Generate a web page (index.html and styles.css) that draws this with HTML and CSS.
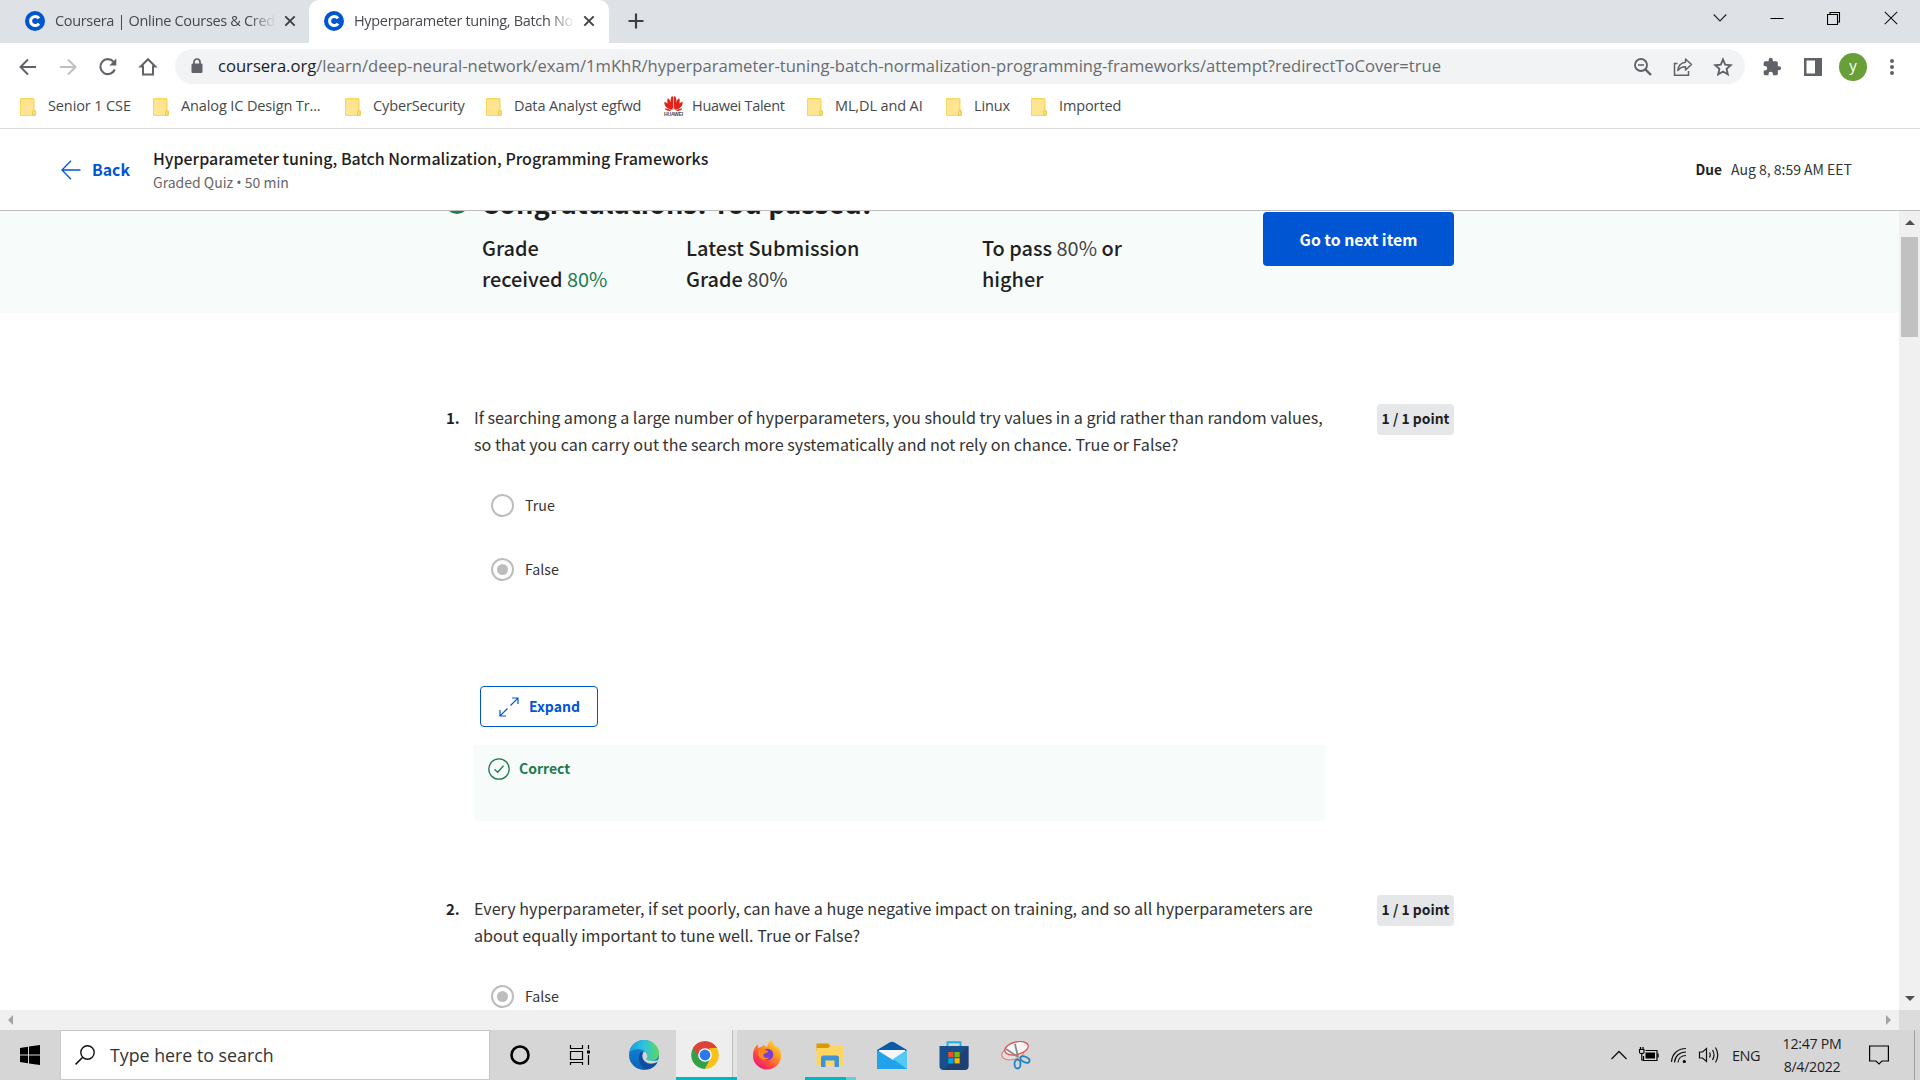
FILE: index.html
```
<!DOCTYPE html>
<html lang="en">
<head>
<meta charset="utf-8">
<title>Hyperparameter tuning, Batch Normalization, Programming Frameworks | Coursera</title>
<link rel="stylesheet" href="styles.css">
</head>
<body>
<svg class="defs" width="0" height="0">
  <symbol id="coursera" viewBox="0 0 20 20"><circle cx="10" cy="10" r="10" fill="#0056d2"/><path d="M14 7.400A4.600 4.600 0 1 0 14 12.600" fill="none" stroke="#fff" stroke-width="3"/></symbol>
  <symbol id="folder" viewBox="0 0 16 18"><path d="M1 0H13Q14.5 0 14.5 1.500V12L16 13V17L15 18H1Q0 18 0 17V1Q0 0 1 0Z" fill="#fbd75b"/><path d="M1 1.500H13V17H1Z" fill="#ffe592"/><path d="M12.500 17V14Q12.500 12.500 14 12.500H15V17Z" fill="#ffe592" stroke="#edc241" stroke-width=".8"/></symbol>
  <symbol id="close" viewBox="0 0 12 12"><path d="M1.300 1.300L10.700 10.700M10.700 1.300L1.300 10.700" stroke="#3c4043" stroke-width="1.900"/></symbol>
</svg>

<header class="tabstrip">
  <div class="tab tab-idle"><svg class="favicon"><use href="#coursera"/></svg><span class="tab-title">Coursera | Online Courses &amp; Cred</span><svg class="tab-close"><use href="#close"/></svg></div>
  <div class="tab tab-active"><svg class="favicon"><use href="#coursera"/></svg><span class="tab-title">Hyperparameter tuning, Batch No</span><svg class="tab-close"><use href="#close"/></svg></div>
  <svg class="newtab" viewBox="0 0 16 16"><path d="M8 .5V15.500M.5 8H15.500" stroke="#3c4043" stroke-width="2.200"/></svg>
  <div class="window-controls">
    <svg viewBox="0 0 14 14"><path d="M.7 3.500L7 10L13.300 3.500" fill="none" stroke="#222" stroke-width="1.100"/></svg>
    <svg viewBox="0 0 14 14"><path d="M.5 7.500H13.500" stroke="#000"/></svg>
    <svg viewBox="0 0 14 14"><path d="M.5 3.500H10.500V13.500H.5ZM3 3V1.500H12.500V11H11" fill="none" stroke="#000" stroke-width="1.100"/></svg>
    <svg viewBox="0 0 14 14"><path d="M.8 .8L13.200 13.200M13.200 .8L.8 13.200" stroke="#111" stroke-width="1.100"/></svg>
  </div>
</header>

<nav class="toolbar">
  <div class="nav-buttons">
    <svg viewBox="0 0 20 20"><path d="M18 10H3M10 2.500L2.500 10L10 17.500" fill="none" stroke="#5f6368" stroke-width="2"/></svg>
    <svg viewBox="0 0 20 20"><path d="M2 10H17M10 2.500L17.500 10L10 17.500" fill="none" stroke="#bfc1c3" stroke-width="2"/></svg>
    <svg viewBox="0 0 20 20"><path d="M16.800 12.500A7.500 7.500 0 1 1 15.500 4.700" fill="none" stroke="#5f6368" stroke-width="2.100"/><path d="M18.300 1.500V8.500H11.300Z" fill="#5f6368"/></svg>
    <svg viewBox="0 0 20 20"><path d="M5 17.500V9.500H2.700L10 2.200L17.300 9.500H15V17.500Z" fill="none" stroke="#5f6368" stroke-width="2"/></svg>
  </div>
  <div class="omnibox">
    <svg class="lock" viewBox="0 0 12 16"><path d="M3 6V4A3 3 0 0 1 9 4V6" fill="none" stroke="#5f6368" stroke-width="1.700"/><rect x=".5" y="5.500" width="11" height="9.500" rx="1.300" fill="#5f6368"/></svg>
    <span class="url"><b>coursera.org</b>/learn/deep-neural-network/exam/1mKhR/hyperparameter-tuning-batch-normalization-programming-frameworks/attempt?redirectToCover=true</span>
    <div class="omni-actions">
      <svg viewBox="0 0 20 20"><circle cx="8" cy="8" r="6" fill="none" stroke="#5f6368" stroke-width="1.900"/><path d="M5 8H11" stroke="#5f6368" stroke-width="1.600"/><path d="M12.300 12.300L18 18" stroke="#5f6368" stroke-width="2.400"/></svg>
      <svg viewBox="0 0 20 20"><path d="M4.500 6.500H1.500V18.200H15.500V14" fill="none" stroke="#5f6368" stroke-width="1.500"/><path d="M12.500 2L18.500 7.500L12.500 13V9.800C9 9.800 6.700 11 4.800 13.500C5.200 9 8 5.800 12.500 5.200Z" fill="none" stroke="#5f6368" stroke-width="1.500" stroke-linejoin="round"/></svg>
      <svg viewBox="0 0 20 20"><path d="M10 2.500L12.200 7.700L17.800 8.200L13.600 11.900L14.800 17.400L10 14.500L5.200 17.400L6.400 11.900L2.200 8.200L7.800 7.700Z" fill="none" stroke="#5f6368" stroke-width="1.900"/></svg>
    </div>
  </div>
  <div class="browser-actions">
    <svg viewBox="0 0 24 24"><path d="M20.500 11H19V7a2 2 0 0 0-2-2h-4V3.500a2.500 2.500 0 0 0-5 0V5H4a2 2 0 0 0-2 2v3.800h1.500a2.700 2.700 0 0 1 0 5.400H2V20a2 2 0 0 0 2 2h3.800v-1.500a2.700 2.700 0 0 1 5.400 0V22H17a2 2 0 0 0 2-2v-4h1.500a2.500 2.500 0 0 0 0-5z" fill="#5f6368"/></svg>
    <svg viewBox="0 0 20 20"><path fill-rule="evenodd" d="M1 1H19V19H1ZM3.500 3.500V16.500H12V3.500Z" fill="#5f6368"/></svg>
    <span class="avatar">y</span>
    <svg viewBox="0 0 20 20"><g fill="#5f6368"><circle cx="10" cy="4" r="2"/><circle cx="10" cy="10" r="2"/><circle cx="10" cy="16" r="2"/></g></svg>
  </div>
</nav>

<nav class="bookmarks">
  <span class="bookmark"><svg><use href="#folder"/></svg><span>Senior 1 CSE</span></span>
  <span class="bookmark"><svg><use href="#folder"/></svg><span>Analog IC Design Tr...</span></span>
  <span class="bookmark"><svg><use href="#folder"/></svg><span>CyberSecurity</span></span>
  <span class="bookmark"><svg><use href="#folder"/></svg><span>Data Analyst egfwd</span></span>
  <span class="bookmark huawei"><span class="huawei-logo"><svg viewBox="0 0 20 15"><g fill="#e2231a"><path d="M9.700 14C6.800 9 6.300 4 8.200.3Q9.600.2 9.700 1Z"/><path d="M10.300 14C13.200 9 13.700 4 11.800.3Q10.400.2 10.300 1Z"/><path d="M9 14C4.500 10.500 2.800 6.500 4.300 2.200C6.500 3 8.500 8 9 14Z"/><path d="M11 14C15.500 10.500 17.200 6.500 15.700 2.200C13.500 3 11.500 8 11 14Z"/><path d="M8.300 14C3.500 13 .4 10 .9 5.800C4 6.500 7 10 8.300 14Z"/><path d="M11.700 14C16.500 13 19.600 10 19.100 5.800C16 6.500 13 10 11.700 14Z"/><path d="M7.800 14.800C4.500 15.300 2 14.200 1.100 12.200Q5 12.200 7.800 14.800Z"/><path d="M12.200 14.800C15.500 15.300 18 14.200 18.900 12.200Q15 12.200 12.200 14.800Z"/></g></svg><i>HUAWEI</i></span><span>Huawei Talent</span></span>
  <span class="bookmark"><svg><use href="#folder"/></svg><span>ML,DL and AI</span></span>
  <span class="bookmark"><svg><use href="#folder"/></svg><span>Linux</span></span>
  <span class="bookmark"><svg><use href="#folder"/></svg><span>Imported</span></span>
</nav>

<header class="quiz-header">
  <a class="back"><svg viewBox="0 0 20 20"><path d="M19.500 10H1.500M10 .8L1 10L10 19.200" fill="none" stroke="#0056d2" stroke-width="1.300"/></svg>Back</a>
  <div class="quiz-name"><h1>Hyperparameter tuning, Batch Normalization, Programming Frameworks</h1><p>Graded Quiz <span class="dot">•</span> 50 min</p></div>
  <div class="due"><b>Due</b>Aug 8, 8:59 AM EET</div>
</header>

<div class="viewport">
  <main class="page">
    <section class="banner">
      <div class="congrats"><svg viewBox="0 0 24 24"><circle cx="12" cy="12" r="12" fill="#1d7c50"/><path d="M6.500 12.500L10.500 16.500L17.500 8.500" fill="none" stroke="#fff" stroke-width="2"/></svg><h2>Congratulations! You passed!</h2></div>
      <div class="scores">
        <p>Grade<br>received <span class="green">80%</span></p>
        <p>Latest Submission<br>Grade <span>80%</span></p>
        <p>To pass <span>80%</span> or<br>higher</p>
        <button class="next">Go to next item</button>
      </div>
    </section>

    <article class="question">
      <b class="number">1.</b>
      <div class="question-body">
        <p class="prompt">If searching among a large number of hyperparameters, you should try values in a grid rather than random values,<br>so that you can carry out the search more systematically and not rely on chance. True or False?</p>
        <div class="option"><span class="radio"></span><span class="answer">True</span></div>
        <div class="option"><span class="radio checked"></span><span class="answer">False</span></div>
        <button class="expand"><svg viewBox="0 0 20 20"><path d="M11.500 8.500L18.700 1.300M13 1H19V7M8.500 11.500L1.300 18.700M1 13V19H7" fill="none" stroke="#0056d2" stroke-width="1.200"/></svg><span>Expand</span></button>
        <div class="feedback"><svg viewBox="0 0 22 22"><circle cx="11" cy="11" r="10.200" fill="none" stroke="#1d7c50" stroke-width="1.300"/><path d="M6.500 11.200L9.700 14.300L15.500 7.800" fill="none" stroke="#1d7c50" stroke-width="1.300"/></svg>Correct</div>
      </div>
      <span class="points">1 / 1 point</span>
    </article>

    <article class="question">
      <b class="number">2.</b>
      <div class="question-body">
        <p class="prompt">Every hyperparameter, if set poorly, can have a huge negative impact on training, and so all hyperparameters are<br>about equally important to tune well. True or False?</p>
        <div class="option"><span class="radio checked"></span><span class="answer">False</span></div>
      </div>
      <span class="points">1 / 1 point</span>
    </article>
  </main>
  <div class="vscroll"><i class="up"></i><span class="thumb"></span><i class="down"></i></div>
</div>
<div class="hscroll"><i class="left"></i><i class="right"></i><span class="corner"></span></div>

<footer class="taskbar">
  <div class="start"><svg viewBox="0 0 20 20"><path d="M0 2.900L8 1.800V9.500H0ZM9 1.600L20 0V9.500H9ZM0 10.500H8V18.200L0 17.100ZM9 10.500H20V20L9 18.400Z"/></svg></div>
  <div class="search"><svg viewBox="0 0 20 20"><circle cx="12.500" cy="7.500" r="6.700" fill="none" stroke="#111" stroke-width="1.400"/><path d="M7.700 12.300L.6 19.400" stroke="#111" stroke-width="1.500"/></svg>Type here to search</div>
  <div class="apps">
    <div class="app"><svg viewBox="0 0 32 32"><circle cx="15" cy="16" r="8.500" fill="none" stroke="#000" stroke-width="2.600"/></svg></div>
    <div class="app"><svg viewBox="0 0 32 32"><path d="M4.500 6V9.500H16.500V6M4.500 12.500H16.500V20.500H4.500ZM4.500 26V23.500H16.500V26M22.500 6V10M22.500 16V26" fill="none" stroke="#000" stroke-width="1.200"/><rect x="21" y="11.500" width="3" height="3"/></svg></div>
    <div class="app"><svg viewBox="0 0 32 32"><defs><linearGradient id="ea" x1="0" x2="1"><stop offset="0" stop-color="#1a9fe0"/><stop offset=".5" stop-color="#2fc2df"/><stop offset="1" stop-color="#5fd95a"/></linearGradient><linearGradient id="eb" x2="0" y2="1"><stop stop-color="#1289d8"/><stop offset="1" stop-color="#0b63b8"/></linearGradient></defs><circle cx="16" cy="16" r="15" fill="url(#eb)"/><path d="M1.200 14C2 6 8.500 1 16 1C25 1 31 7.500 31 14.500C31 19 27.500 22 23 22C19.500 22 18 20.500 18.500 19.500C20 17.500 19.500 12 12.500 10.500C7 9.500 3 11 1.200 14Z" fill="url(#ea)"/><path d="M12.500 13.500C8.500 19 12 29.500 20 30.500C24 29.500 27.500 27 29.500 23.500C24 26.500 16 25 14.500 19.500C14 17 15 15.500 15.500 12.500Z" fill="#124c9c"/><path d="M15.800 12.500C12.500 17 15 23.500 22 24.500C25.500 25 28.500 23.500 30 22L32 24V20C29 22.500 20 22.500 18.500 20.500C18.300 19.500 20 18.500 19 15.500C18.300 13.500 17 12.500 15.800 12.500Z" fill="#d6d6d6"/></svg></div>
    <div class="app current"><svg viewBox="0 0 32 32"><path d="M16 16L4 9.100A13.900 13.900 0 0 1 28 9.100Z" fill="#ea4335"/><path d="M4 9.100A13.900 13.900 0 0 0 16 29.900L22 19.500L16 16Z" fill="#34a04c"/><path d="M28 9.100A13.900 13.900 0 0 1 16 29.900L22 18L20 9.100Z" fill="#fbc116"/><path d="M4 9.100A13.900 13.900 0 0 1 28 9.100H16L10 18Z" fill="#db4437"/><circle cx="16" cy="16" r="6.800" fill="#fff"/><circle cx="16" cy="16" r="5.400" fill="#2b79ec"/></svg></div>
    <div class="app"><svg viewBox="0 0 32 32"><defs><linearGradient id="fa" x1="1" y1="0" x2=".2" y2="1"><stop stop-color="#fff44f"/><stop offset=".4" stop-color="#ff9a1f"/><stop offset=".75" stop-color="#ff4045"/><stop offset="1" stop-color="#e31587"/></linearGradient></defs><path d="M20 1C23 4 23 6 25 8C26 8 26.500 7 26.500 6.500C29 9.500 30 13 30 17A14 13.500 0 0 1 2 17C2 12 3.500 9.500 5 7L6.500 5.500L7.500 9L11 7.500L13 6L15.500 8.500C17 6 17.500 3 20 1Z" fill="url(#fa)"/><circle cx="16.500" cy="15.500" r="5.800" fill="#7a3fd0"/><path d="M7.500 11C11 8.500 14 11 17 12C17 14 14 14 12.500 15.500C12 18 14 19.500 18 18.500C15 22.500 8 21 7.500 15Z" fill="#ff8b1c"/></svg></div>
    <div class="app explorer"><svg viewBox="0 0 32 32"><path d="M2.500 4.500H14.500L16 7V12H2.500Z" fill="#d99a00"/><path d="M2.500 9H14L16.500 7H29.500V26H2.500Z" fill="#ffd562"/><path d="M7 28V19Q7 16.500 9.500 16.500H22.500Q25 16.500 25 19V28H20.500V21.500H11.500V28Z" fill="#3c93d8"/></svg></div>
    <div class="app"><svg viewBox="0 0 32 32"><path d="M1 11L13.500 3.500Q16 2 18.500 3.500L31 11V18H1Z" fill="#0a5aa8"/><path d="M3 11H29V20L16 26L3 20Z" fill="#f5f5f5"/><path d="M1 11L17 21L31 11V30H1Z" fill="#22a2e8"/><path d="M31 11L17 20L31 30Z" fill="#54c8f5"/></svg></div>
    <div class="app"><svg viewBox="0 0 32 32"><path d="M9.500 8V3.200H22.500V8" fill="none" stroke="#1db0ec" stroke-width="1.900"/><path d="M1.500 7H30.500V27Q30.500 31 26.500 31H5.500Q1.500 31 1.500 27Z" fill="#18508c"/><path d="M30.500 7V27Q30.500 31 26.500 31H5.500Z" fill="#203965" opacity=".65"/><path d="M10.300 13H15.500V18.200H10.300Z" fill="#f25022"/><path d="M16.500 13H21.700V18.200H16.500Z" fill="#7fba00"/><path d="M10.300 19.200H15.500V24.400H10.300Z" fill="#00a4ef"/><path d="M16.500 19.200H21.700V24.400H16.500Z" fill="#ffb900"/></svg></div>
    <div class="app"><svg viewBox="0 0 32 32"><ellipse cx="13" cy="14" rx="11.500" ry="6.500" transform="rotate(-15 13 14)" fill="#e6dede" stroke="#e07b78" stroke-width="1"/><ellipse cx="16.500" cy="9.300" rx="12" ry="6.300" transform="rotate(-14 16.500 9.300)" fill="#f6f6f6" stroke="#e64b48" stroke-width="1.200"/><path d="M15 5L18 18M6 10L18 18" stroke="#888" stroke-width="1.700"/><ellipse cx="17.500" cy="25" rx="3" ry="4.500" fill="none" stroke="#1d84c4" stroke-width="1.800"/><ellipse cx="25" cy="20.500" rx="4.800" ry="2.700" transform="rotate(25 25 20.500)" fill="none" stroke="#1d84c4" stroke-width="1.800"/></svg></div>
  </div>
  <div class="tray">
    <svg viewBox="0 0 22 20"><path d="M3.500 14L11 6.500L18.500 14" fill="none" stroke="#111" stroke-width="1.300"/></svg>
    <svg viewBox="0 0 22 20"><path d="M7.500 5.500H19V15.500H5.500V11" fill="none" stroke="#000" stroke-width="1.200"/><rect x="7.500" y="7.500" width="9.500" height="6"/><path d="M20 8.500V12.500M2.500 2V4.500M5 2V4.500" stroke="#000" stroke-width="1.300"/><path d="M1.500 4.500H6V7Q6 8.500 3.800 8.500Q1.500 8.500 1.500 7ZM3.800 8.500V15H5.500" fill="none" stroke="#000" stroke-width="1.100"/></svg>
    <svg viewBox="0 0 22 20"><g fill="none" stroke="#111" stroke-width="1.200"><path d="M3.500 17C4 9 9.500 3.500 18 3.500M6.500 17.500C7 11 11.500 7 18 7M10 17.500C10.500 13 13 10.500 18 10.500"/></g><circle cx="16.300" cy="16.500" r="1.600"/></svg>
    <svg viewBox="0 0 22 20"><g fill="none" stroke="#111" stroke-width="1.200"><path d="M1.500 7H4.500L8.500 3.500V16.500L4.500 13H1.500ZM11.500 7.500Q13 10 11.500 12.500M14.500 5Q17.500 10 14.500 15M17.500 2.500Q22 10 17.500 17.500"/></g></svg>
    <span class="lang">ENG</span>
    <div class="clock"><span>12:47 PM</span><span>8/4/2022</span></div>
    <svg class="notify" viewBox="0 0 20 20"><path d="M.6 1H19.400V16H13L10 19L7 16H.6Z" fill="none" stroke="#000" stroke-width="1.200"/></svg>
  </div>
</footer>
</body>
</html>
```
FILE: styles.css
```
* { box-sizing: border-box; }
body {
  margin: 0;
  width: 1920px;
  height: 1080px;
  overflow: hidden;
  display: flex;
  flex-direction: column;
  background: #fff;
  color: #1f1f1f;
  font-family: "Noto Sans CJK SC", sans-serif;
}
svg { flex: none; display: block; }
h1, h2, p { margin: 0; }
.defs { position: absolute; }

/* Browser chrome */
.tabstrip, .toolbar, .bookmarks, .taskbar { font-family: "Open Sans", sans-serif; flex: none; }
.tabstrip { height: 43px; background: #dee1e6; display: flex; align-items: center; }
.tab { height: 43px; display: flex; align-items: center; padding: 0 14px 2px 15px; }
.tab-idle { width: 309px; padding: 0 13px 2px 25px; }
.tab-active { width: 300px; background: #fff; border-radius: 10px 10px 0 0; }
.favicon { width: 20px; height: 20px; }
.tab-title {
  flex: 1;
  margin: 0 8px 0 10px;
  overflow: hidden;
  white-space: nowrap;
  color: #45494d;
  font-size: 14.500px;
  letter-spacing: -.33px;
  -webkit-mask-image: linear-gradient(90deg, #000 88%, transparent);
  mask-image: linear-gradient(90deg, #000 88%, transparent);
}
.tab-close { width: 12px; height: 12px; }
.newtab { width: 16px; height: 16px; margin: 0 0 1px 19px; }
.window-controls { margin: 0 22px 7px auto; display: flex; gap: 43px; }
.window-controls svg { width: 14px; height: 14px; }
.toolbar { height: 47px; display: flex; align-items: center; }
.nav-buttons { width: 175px; padding-left: 18px; display: flex; gap: 20px; }
.nav-buttons svg { width: 20px; height: 20px; }
.omnibox { width: 1570px; height: 35px; border-radius: 18px; background: #f1f3f4; display: flex; align-items: center; padding: 0 12px 0 16px; }
.lock { width: 12px; height: 16px; margin: 0 15px 2px 0; }
.url { font-size: 16.600px; white-space: nowrap; color: #696c70; line-height: 32px; height: 34px; }
.url b { font-weight: 400; color: #202124; }
.omni-actions { margin-left: auto; display: flex; gap: 20px; }
.omni-actions svg, .browser-actions svg { width: 20px; height: 20px; }
.browser-actions { display: flex; align-items: center; padding-left: 17px; }
.browser-actions svg:nth-child(2) { margin: 0 16px 0 21px; }
.avatar { width: 28px; height: 28px; margin-right: 15px; border-radius: 50%; background: #689f38; color: #fff; text-align: center; font-size: 15px; line-height: 25px; }
.bookmarks { height: 39px; border-bottom: 1px solid #dadce0; padding: 0 0 5px 20px; display: grid; grid-template-columns: 133px 192px 141px 177px 144px 139px 85px 120px; align-items: center; }
.bookmark { display: flex; align-items: center; gap: 12px; white-space: nowrap; font-size: 14.500px; letter-spacing: -.12px; color: #45494d; }
.bookmark > span:last-child { padding-bottom: 2px; }
.bookmark svg { width: 16px; height: 18px; }
.huawei { gap: 8px; letter-spacing: -.28px; }
.bookmark .huawei-logo { width: 21px; text-align: center; }
.huawei-logo svg { width: 21px; height: 15px; }
.huawei-logo i { display: block; font: 700 5px/6px "Liberation Sans", sans-serif; letter-spacing: -.2px; }

/* Quiz header */
.quiz-header { flex: none; height: 82px; border-bottom: 1px solid #bdbdbd; display: flex; padding-left: 61px; }
.back { width: 92px; display: flex; align-items: center; gap: 11px; font-size: 15.800px; font-weight: 700; color: #0056d2; }
.back svg { width: 20px; height: 20px; }
.quiz-name { padding-top: 17px; }
.quiz-name h1 { font-size: 15.980px; line-height: 24px; font-weight: 500; }
.quiz-name p { font-size: 14px; line-height: 24px; color: #666; }
.dot { font-family: "Open Sans", sans-serif; font-size: 14px; }
.due { margin: 0 68px 0 auto; padding-bottom: 2px; display: flex; align-items: center; gap: 9px; font-size: 14px; color: #333; }
.due b { color: #1f1f1f; font-size: 13.700px; }

/* Page */
.viewport { height: 799px; flex: none; display: flex; overflow: hidden; }
.page { width: 1899px; overflow: hidden; }
.banner { display: flow-root; height: 102px; background: #f7fbfa; padding-left: 445px; }
.congrats { height: 40px; margin-top: -29px; display: flex; align-items: center; gap: 12px; }
.congrats svg { width: 24px; height: 24px; margin-top: -1px; }
.congrats h2 { font-size: 27.250px; line-height: 40px; white-space: nowrap; }
.scores { display: grid; grid-template-columns: 204px 296px 281px 191px; padding-left: 37px; margin-top: 10px; }
.scores p { font-size: 19.900px; line-height: 31px; font-weight: 500; white-space: nowrap; }
.scores span { font-weight: 400; color: #444; }
.scores .green { color: #1d7c50; }
button { font-family: inherit; font-weight: 700; padding: 0; }
.next { height: 54px; margin-top: -20px; border: 0; border-radius: 4px; background: #0056d2; color: #fff; font-size: 15.800px; }
.question { display: flex; padding: 91px 445px 0 446px; height: 491px; }
.number { width: 28px; font-size: 15px; line-height: 27px; }
.question-body { width: 851px; }
.prompt { font-size: 16.110px; line-height: 27px; color: #333; white-space: nowrap; }
.option { height: 64px; display: flex; align-items: center; gap: 11px; padding-left: 17px; font-size: 14.200px; color: #333; }
.answer { padding-bottom: 1px; }
.prompt + .option { margin-top: 15px; }
.radio { width: 23px; height: 23px; border: 2px solid #bdbdbd; border-radius: 50%; display: grid; place-items: center; }
.checked::after { content: ""; width: 11px; height: 11px; border-radius: 50%; background: #bdbdbd; }
.expand { margin: 85px 0 0 6px; width: 118px; height: 41px; border: 1px solid #0056d2; border-radius: 4px; background: #fff; color: #0056d2; display: flex; align-items: center; gap: 10px; padding-left: 18px; font-size: 14px; }
.expand span { padding-bottom: 2px; }
.expand svg { width: 20px; height: 20px; }
.feedback { margin-top: 18px; height: 76px; background: #f7fbfa; color: #1d7c50; display: flex; gap: 9px; padding: 13px 14px; font-size: 14px; line-height: 21px; font-weight: 700; }
.feedback svg { width: 22px; height: 22px; }
.points { width: 77px; height: 31px; margin: 0 0 0 52px; border-radius: 4px; background: #e5e7e8; text-align: center; font-size: 13.900px; font-weight: 700; line-height: 29px; white-space: nowrap; }
.vscroll { width: 21px; background: #f0f0f0; display: flex; flex-direction: column; align-items: center; padding: 9px 0; }
.thumb { width: 17px; height: 100px; margin-top: 12px; background: #c1c1c1; }
.vscroll i, .hscroll i { border: 5px solid transparent; width: 0; height: 0; }
.vscroll .up { border-top: 0; border-bottom-color: #505050; }
.vscroll .down { border-bottom: 0; border-top-color: #505050; margin-top: auto; }
.hscroll { flex: none; height: 20px; background: #f0f0f0; display: flex; align-items: center; padding-left: 8px; }
.hscroll .left { border-left: 0; border-right-color: #a3a3a3; }
.hscroll .right { border-right: 0; border-left-color: #a3a3a3; margin-left: auto; }
.corner { width: 21px; height: 20px; margin-left: 8px; background: #dcdcdc; }

/* Taskbar */
.taskbar { height: 50px; background: #d6d6d6; display: flex; }
.start { width: 60px; display: grid; place-items: center; }
.start svg { width: 20px; height: 20px; }
.search { width: 430px; height: 50px; background: #fff; border: 1px solid #c8c8c8; display: flex; align-items: center; gap: 15px; padding-left: 14px; font-size: 17.800px; color: #333; }
.search svg { width: 20px; height: 20px; }
.apps { display: flex; }
.app { width: 62px; display: grid; place-items: center; }
.app svg { width: 32px; height: 32px; }
.app:nth-child(2) { width: 60px; }
.app:nth-child(3) { width: 64px; }
.current { width: 61px; background: linear-gradient(90deg, #eee 0 56px, #bebebe 56px 57px, #e4e4e4 57px); border-bottom: 3px solid #00b7c3; padding-right: 3px; }
.current svg { margin-top: 3px; }
.app:nth-child(5) { padding-right: 2px; }
.explorer { background: linear-gradient(90deg, transparent 0 6px, #00b7c3 6px 47px, #5fd0d4 47px 57px, transparent 57px) bottom / 100% 3px no-repeat; }
.tray { margin-left: auto; padding-right: 5px; display: flex; align-items: center; }
.tray > svg { width: 22px; height: 20px; margin-right: 8px; }
.lang { width: 29px; margin: 0 18px 0 4px; font-size: 14.500px; letter-spacing: -.5px; }
.clock { width: 66px; text-align: center; display: flex; flex-direction: column; font-size: 14.200px; line-height: 23px; letter-spacing: -.3px; white-space: nowrap; padding-bottom: 1px; }
.tray > .notify { width: 20px; height: 20px; margin: 0 25px 0 24px; }
.tray::after { content: ""; width: 1px; height: 50px; background: #a0a0a0; }
```
